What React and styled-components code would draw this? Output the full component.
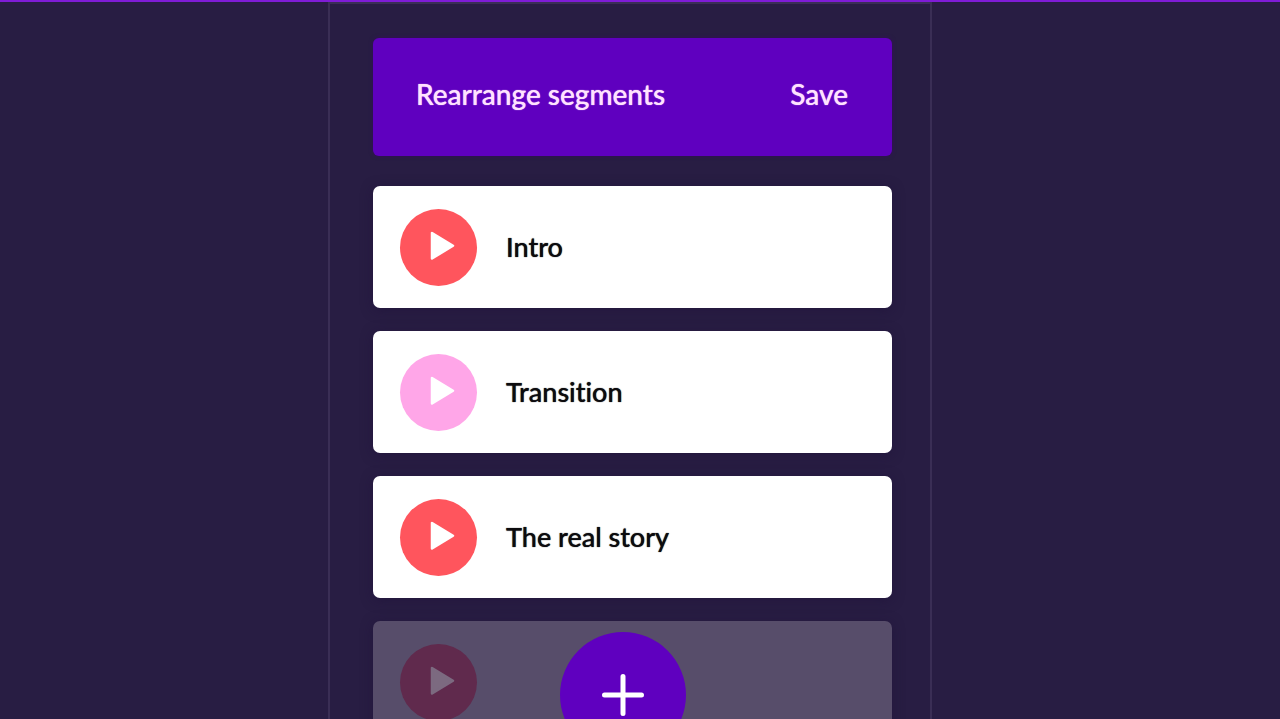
import React from "react";
import styled, { createGlobalStyle } from "styled-components";

const GlobalStyle = createGlobalStyle`
  * {
    box-sizing: border-box;
  }

  body {
    margin: 0;
    background-color: #281d43;
    font-family: Lato, "Liberation Sans", sans-serif;
    font-variant-ligatures: none;
  }

  button {
    border: none;
    padding: 0;
    font: inherit;
    cursor: pointer;
  }
`;

const Page = styled.div`
  display: flex;
  flex-direction: column;
  height: 100vh;
  overflow: hidden;
  border-top: 2px solid #7f1cd6;
  background-color: #281d43;
`;

const Stage = styled.main`
  flex: 1;
  min-height: 0;
  display: flex;
  justify-content: center;
  padding-right: 20px;
`;

const Panel = styled.section`
  position: relative;
  width: 100%;
  max-width: 604px;
  padding: 34px 38px 0 43px;
  border: 2px solid #3a2e55;
  border-bottom: none;
`;

const Header = styled.header`
  display: flex;
  align-items: center;
  justify-content: space-between;
  height: 118px;
  padding: 0 44px 6px 43px;
  border-radius: 6px;
  background-color: #5f00bf;
  box-shadow: 0 0 4px rgba(60, 0, 110, 0.6);
  color: #ffe2ff;
  text-shadow: 0 0 1px currentColor;
`;

const Title = styled.h1`
  margin: 0;
  font-size: 28px;
  font-weight: 500;
  line-height: 32px;
`;

const SaveButton = styled.button`
  background: none;
  color: inherit;
  text-shadow: inherit;

  && {
    font-size: 28px;
    font-weight: 500;
    line-height: 32px;
  }
`;

const List = styled.ul`
  display: flex;
  flex-direction: column;
  gap: 23px;
  margin: 30px 0 0;
  padding: 0;
  list-style: none;
`;

const Segment = styled.li`
  display: flex;
  align-items: center;
  gap: 29px;
  height: 122px;
  padding: 0 27px;
  border-radius: 7px;
  background-color: ${(props) => (props.$ghost ? "#574d6a" : "#ffffff")};
  box-shadow: 0 2px 12px rgba(30, 16, 56, 0.5);
`;

const PlayButton = styled.button`
  display: flex;
  flex-shrink: 0;
  width: 77px;
  height: 77px;
  border-radius: 50%;
  background-color: ${(props) => props.$color};
  color: ${(props) => props.$arrow || "#ffffff"};
`;

const SegmentName = styled.span`
  color: #0c0b0e;
  font-size: 27px;
  font-weight: 500;
  line-height: 32px;
  text-shadow: 0 0 1px currentColor;
`;

/* Floats over the list, half below the fold */
const AddButton = styled.button`
  position: absolute;
  bottom: -39px;
  left: calc(50% - 70px);
  display: flex;
  align-items: center;
  justify-content: center;
  width: 126px;
  height: 126px;
  border-radius: 50%;
  background-color: #5f00bf;
  color: #ffffff;
`;

const segments = [
  { name: "Intro", color: "#ff555d" },
  { name: "Transition", color: "#ffa6e8" },
  { name: "The real story", color: "#ff555d" },
  { name: "", color: "#602a4d", arrow: "#7c6a80", ghost: true },
];

function PlayIcon() {
  return (
    <svg width="77" height="77" viewBox="0 0 77 77" aria-hidden="true">
      <path
        d="M32 24V49.5L53 36.7Z"
        fill="currentColor"
        stroke="currentColor"
        strokeWidth="2.5"
        strokeLinejoin="round"
      />
    </svg>
  );
}

function PlusIcon() {
  return (
    <svg width="42" height="42" viewBox="0 0 42 42" aria-hidden="true">
      <path
        d="M21 2.5V39.5M2.5 21H39.5"
        fill="none"
        stroke="currentColor"
        strokeWidth="5"
        strokeLinecap="round"
      />
    </svg>
  );
}

function App() {
  return (
    <Page>
      <GlobalStyle />
      <Stage>
        <Panel>
          <Header>
            <Title>Rearrange segments</Title>
            <SaveButton type="button">Save</SaveButton>
          </Header>
          <List>
            {segments.map((segment, i) => (
              <Segment key={i} $ghost={segment.ghost}>
                <PlayButton
                  type="button"
                  aria-label={`Play ${segment.name || "segment"}`}
                  $color={segment.color}
                  $arrow={segment.arrow}
                >
                  <PlayIcon />
                </PlayButton>
                {segment.name && <SegmentName>{segment.name}</SegmentName>}
              </Segment>
            ))}
          </List>
          <AddButton type="button" aria-label="Add segment">
            <PlusIcon />
          </AddButton>
        </Panel>
      </Stage>
    </Page>
  );
}

export default App;
